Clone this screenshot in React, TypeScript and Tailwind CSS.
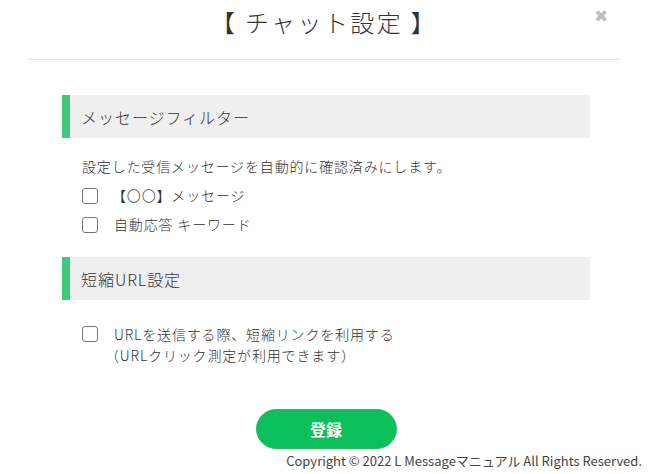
import { useState } from 'react';

const font = { fontFamily: '"Noto Sans CJK JP", "Noto Sans", sans-serif' };

function SectionHeader({ title }: { title: string }) {
  return (
    <div className="flex h-[43px] items-center border-l-[8px] border-[#3ec97c] bg-[#efefef] pl-[11px] text-[16px] font-light tracking-[0.06em] text-[#333]">
      {title}
    </div>
  );
}

function Check({ checked, onChange }: { checked: boolean; onChange: () => void }) {
  return (
    <button
      type="button"
      onClick={onChange}
      className="mt-[1px] h-[16px] w-[16px] shrink-0 rounded-[3px] border border-[#767676] bg-white"
    >
      {checked && (
        <svg viewBox="0 0 16 16" className="h-full w-full">
          <path d="M3.5 8.5L6.5 11.5L12.5 4.5" stroke="#333" strokeWidth="2" fill="none" />
        </svg>
      )}
    </button>
  );
}

export default function App() {
  const [checks, setChecks] = useState([false, false, false]);
  const toggle = (i: number) => setChecks((c) => c.map((v, j) => (j === i ? !v : v)));

  return (
    <div className="relative h-[474px] w-[648px] overflow-hidden bg-white text-[#333]" style={font}>
      {/* header */}
      <div className="mx-[28px] flex h-[60px] items-start justify-center border-b border-[#e3e3e3] pt-[5px]">
        <h1 className="text-[24px] font-light leading-[34px] tracking-[0.1em] text-[#333]">【 チャット設定 】</h1>
      </div>
      <span className="absolute left-[594px] top-[3px] text-[17px] leading-[24px] text-[#bdbdbd]">✖</span>

      <div className="ml-[62px] mr-[58px] mt-[35px]">
        <SectionHeader title="メッセージフィルター" />
        <div className="pl-[20px] pt-[18px] text-[14px] font-light tracking-[0.06em]">
          <p className="leading-[21px]">設定した受信メッセージを自動的に確認済みにします。</p>
          <div className="mt-[8px] flex items-center gap-[16px] leading-[21px]">
            <Check checked={checks[0]} onChange={() => toggle(0)} />
            <span className="-ml-[2px]">【〇〇】メッセージ</span>
          </div>
          <div className="mt-[8px] flex items-center gap-[16px] leading-[21px]">
            <Check checked={checks[1]} onChange={() => toggle(1)} />
            <span>自動応答 キーワード</span>
          </div>
        </div>

        <div className="mt-[22px]">
          <SectionHeader title="短縮URL設定" />
        </div>
        <div className="flex gap-[16px] pl-[20px] pt-[24px] text-[14px] font-light leading-[21px] tracking-[0.06em]">
          <div className="pt-[1px]">
            <Check checked={checks[2]} onChange={() => toggle(2)} />
          </div>
          <div>
            <p>URLを送信する際、短縮リンクを利用する</p>
            <p className="-ml-[9px]">（URLクリック測定が利用できます）</p>
          </div>
        </div>

        <div className="mt-[43px] flex justify-center">
          <button
            type="button"
            className="h-[40px] w-[141px] rounded-full border border-[#2fb864] bg-[#0bbf5a] text-[16px] font-bold text-white"
          >
            登録
          </button>
        </div>
      </div>

      <div className="mt-[3px] pr-[6px] text-right text-[13px] leading-[18px] text-[#444]">
        Copyright © 2022 L Messageマニュアル All Rights Reserved.
      </div>
    </div>
  );
}
